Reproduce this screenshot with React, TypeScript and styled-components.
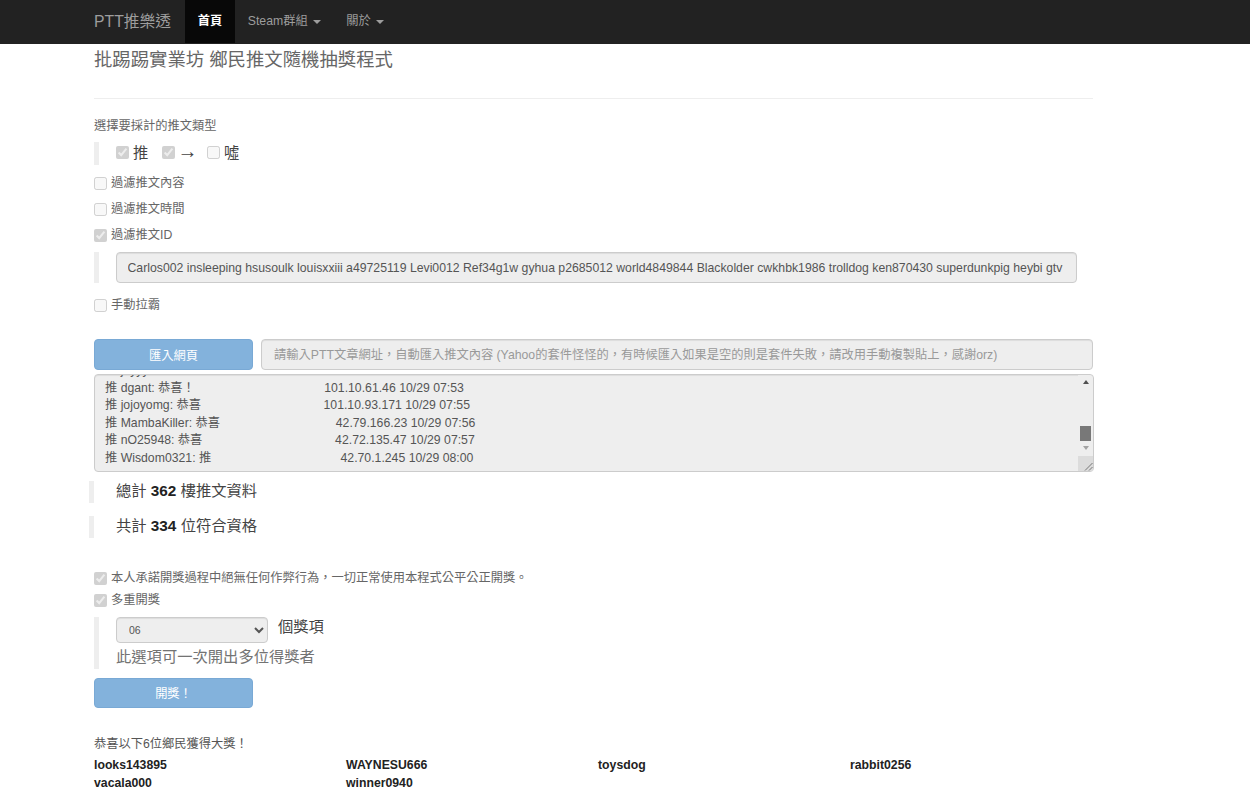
import React, { useEffect, useRef } from "react";
import styled, { createGlobalStyle } from "styled-components";

const FONT = '"Liberation Sans", "Noto Sans CJK TC", sans-serif';

const Global = createGlobalStyle`
  html, body { margin: 0; padding: 0; background: #fff; }
  body { font-family: ${FONT}; font-size: 12.25px; line-height: 17.5px; color: #333; }
  * { box-sizing: border-box; }
`;

const Navbar = styled.nav`
  height: 44px;
  background: #222;
  display: flex;
  padding-left: 94px;
`;
const Brand = styled.div`
  width: 91px;
  font-size: 15.75px;
  line-height: 43px;
  color: #9d9d9d;
`;
const NavItem = styled.div<{ $active?: boolean }>`
  height: 43px;
  padding: 1px 12.75px 0;
  display: flex;
  align-items: center;
  gap: 5px;
  font-size: 12.25px;
  font-weight: ${(p) => (p.$active ? 700 : 400)};
  background: ${(p) => (p.$active ? "#080808" : "transparent")};
  color: ${(p) => (p.$active ? "#fff" : "#9d9d9d")};
`;
const Caret = styled.span`
  width: 0;
  height: 0;
  border-top: 4px solid #9d9d9d;
  border-left: 4px solid transparent;
  border-right: 4px solid transparent;
`;
const Main = styled.main`
  width: 999px;
  margin-left: 94px;
  position: relative;
`;
const Title = styled.h3`
  margin: 0;
  padding-top: 1px;
  font-size: 18.375px;
  font-weight: 400;
  line-height: 29px;
  color: #666;
`;
const Rule = styled.hr`
  margin: 24px 0 19px;
  border: 0;
  border-top: 1px solid #eee;
`;
const Label = styled.div`
  color: #666;
`;
const Quote = styled.div`
  border-left: 5px solid #eee;
  padding-left: 17px;
`;
const TypeQuote = styled(Quote)`
  margin-top: 6.5px;
  height: 23px;
  padding-bottom: 2px;
  display: flex;
  align-items: center;
  font-size: 15.3px;
  color: #444;
`;
const TypeItem = styled.label`
  display: flex;
  align-items: center;
  width: 45.5px;
  gap: 4px;
`;
const TypeArrow = styled.span`
  font-size: 20px;
  line-height: 20px;
  margin-left: -1px;
  padding-bottom: 3px;
`;
const Box = styled.input.attrs({ type: "checkbox", disabled: true })`
  width: 13px;
  height: 13px;
  margin: 0;
  flex: none;
`;
const CheckRow = styled.label<{ $top: number }>`
  display: flex;
  align-items: center;
  gap: 4px;
  height: 17px;
  margin-top: ${(p) => p.$top}px;
  color: #666;
`;
const CheckText = styled.span`
  padding-top: 1px;
`;
const IdQuote = styled(Quote)`
  margin-top: 8px;
  width: 982px;
`;
const field = `
  background: #eee;
  border: 1px solid #ccc;
  border-radius: 4px;
  box-shadow: inset 0 1px 1px rgba(0,0,0,.075);
  font-family: ${FONT};
  font-size: 12.25px;
  color: #555;
`;
const IdField = styled.input`
  ${field}
  display: block;
  width: 961px;
  height: 31px;
  padding: 0 10.5px;
  outline: none;
`;
const ImportRow = styled.div`
  display: flex;
  gap: 8px;
  margin-top: 25px;
`;
const Button = styled.button`
  width: 159px;
  height: 31px;
  flex: none;
  background: #83b2dc;
  border: 1px solid #79a9d5;
  border-radius: 4px;
  color: #fff;
  font-family: ${FONT};
  font-size: 12.25px;
  padding: 0;
`;
const UrlField = styled.input`
  ${field}
  flex: 1;
  height: 31px;
  padding: 0 12px;
  outline: none;
  &::placeholder { color: #999; opacity: 1; }
`;
const LogWrap = styled.div`
  position: relative;
  width: 1000px;
  height: 98px;
  margin-top: 4px;
`;
const Log = styled.textarea`
  ${field}
  display: block;
  width: 100%;
  height: 100%;
  padding: 6px 10px;
  line-height: 17.5px;
  white-space: pre;
  overflow: hidden;
  resize: none;
  outline: none;
`;
const Track = styled.div`
  position: absolute;
  top: 1px;
  right: 1px;
  bottom: 1px;
  width: 15px;
  background: #eee;
  display: flex;
  flex-direction: column;
  align-items: center;
  border-radius: 0 4px 4px 0;
`;
const Arrow = styled.span<{ $up?: boolean }>`
  width: 0;
  height: 0;
  margin-top: 5px;
  border-left: 3.5px solid transparent;
  border-right: 3.5px solid transparent;
  ${(p) => (p.$up ? "border-bottom: 4px solid #505050;" : "border-top: 4px solid #a3a3a3;")}
`;
const Thumb = styled.div`
  width: 11px;
  height: 15px;
  background: #787878;
  margin-top: 42px;
`;
const Grip = styled.svg`
  display: block;
  margin-top: auto;
  width: 15px;
  height: 15px;
`;
const StatQuote = styled(Quote)<{ $top: number }>`
  margin-left: -5px;
  padding-left: 22px;
  height: 22px;
  font-size: 15.3px;
  line-height: 20px;
  color: #444;
  margin-top: ${(p) => p.$top}px;
  b { color: #222; }
`;
const PrizeQuote = styled(Quote)`
  margin-top: 8px;
  height: 52px;
  display: flex;
  flex-direction: column;
  font-size: 15.3px;
`;
const PrizeLine = styled.div`
  display: flex;
  gap: 10px;
  height: 26px;
  line-height: 19px;
  color: #444;
`;
const Select = styled.select`
  ${field}
  width: 152px;
  height: 26px;
  padding: 0 8px;
  font-size: 10.5px;
  opacity: 1;
`;
const Help = styled.div`
  color: #737373;
  line-height: 28px;
`;
const DrawButton = styled(Button)`
  display: block;
  height: 30px;
  margin-top: 9px;
`;
const Congrats = styled.div`
  margin-top: 27.5px;
  color: #555;
`;
const Winners = styled.div`
  display: grid;
  grid-template-columns: repeat(4, 252px);
  margin-top: 4px;
  font-weight: 700;
  color: #222;
`;

const logText = [
  "推 joyyy: 恭喜",
  "推 dgant: 恭喜！" + " ".repeat(38) + "101.10.61.46 10/29 07:53",
  "推 jojoyomg: 恭喜" + " ".repeat(36) + "101.10.93.171 10/29 07:55",
  "推 MambaKiller: 恭喜" + " ".repeat(34) + "42.79.166.23 10/29 07:56",
  "推 nO25948: 恭喜" + " ".repeat(39) + "42.72.135.47 10/29 07:57",
  "推 Wisdom0321: 推" + " ".repeat(38) + "42.70.1.245 10/29 08:00",
].join("\n");

const ids =
  "Carlos002 insleeping hsusoulk louisxxiii a49725119 Levi0012 Ref34g1w gyhua p2685012 world4849844 Blackolder cwkhbk1986 trolldog ken870430 superdunkpig heybi gtv";

export default function App() {
  const logRef = useRef<HTMLTextAreaElement>(null);
  useEffect(() => {
    if (logRef.current) logRef.current.scrollTop = 19;
  }, []);
  return (
    <>
      <Global />
      <Navbar>
        <Brand>PTT推樂透</Brand>
        <NavItem $active>首頁</NavItem>
        <NavItem>Steam群組 <Caret /></NavItem>
        <NavItem>關於 <Caret /></NavItem>
      </Navbar>
      <Main>
        <Title>批踢踢實業坊 鄉民推文隨機抽獎程式</Title>
        <Rule />
        <Label>選擇要採計的推文類型</Label>
        <TypeQuote>
          <TypeItem><Box defaultChecked />推</TypeItem>
          <TypeItem><Box defaultChecked /><TypeArrow>→</TypeArrow></TypeItem>
          <TypeItem><Box />噓</TypeItem>
        </TypeQuote>
        <CheckRow $top={10}><Box /><CheckText>過濾推文內容</CheckText></CheckRow>
        <CheckRow $top={9}><Box /><CheckText>過濾推文時間</CheckText></CheckRow>
        <CheckRow $top={9}><Box defaultChecked /><CheckText>過濾推文ID</CheckText></CheckRow>
        <IdQuote>
          <IdField disabled value={ids} readOnly />
        </IdQuote>
        <CheckRow $top={14}><Box /><CheckText>手動拉霸</CheckText></CheckRow>
        <ImportRow>
          <Button disabled>匯入網頁</Button>
          <UrlField disabled placeholder="請輸入PTT文章網址，自動匯入推文內容 (Yahoo的套件怪怪的，有時候匯入如果是空的則是套件失敗，請改用手動複製貼上，感謝orz)" />
        </ImportRow>
        <LogWrap>
          <Log ref={logRef} disabled defaultValue={logText} />
          <Track>
            <Arrow $up />
            <Thumb />
            <Arrow />
            <Grip viewBox="0 0 15 15">
              <rect width="15" height="15" fill="#dcdcdc" />
              <path d="M7 14.5 L14.5 7 M11 14.5 L14.5 11" stroke="#777" strokeWidth="1" />
            </Grip>
          </Track>
        </LogWrap>
        <StatQuote $top={9}>總計 <b>362</b> 樓推文資料</StatQuote>
        <StatQuote $top={13}>共計 <b>334</b> 位符合資格</StatQuote>
        <CheckRow $top={32}><Box defaultChecked /><CheckText>本人承諾開獎過程中絕無任何作弊行為，一切正常使用本程式公平公正開獎。</CheckText></CheckRow>
        <CheckRow $top={5}><Box defaultChecked /><CheckText>多重開獎</CheckText></CheckRow>
        <PrizeQuote>
          <PrizeLine>
            <Select disabled defaultValue="06">
              <option>06</option>
            </Select>
            個獎項
          </PrizeLine>
          <Help>此選項可一次開出多位得獎者</Help>
        </PrizeQuote>
        <DrawButton disabled>開獎！</DrawButton>
        <Congrats>恭喜以下6位鄉民獲得大獎！</Congrats>
        <Winners>
          <div>looks143895</div>
          <div>WAYNESU666</div>
          <div>toysdog</div>
          <div>rabbit0256</div>
          <div>vacala000</div>
          <div>winner0940</div>
        </Winners>
      </Main>
    </>
  );
}
